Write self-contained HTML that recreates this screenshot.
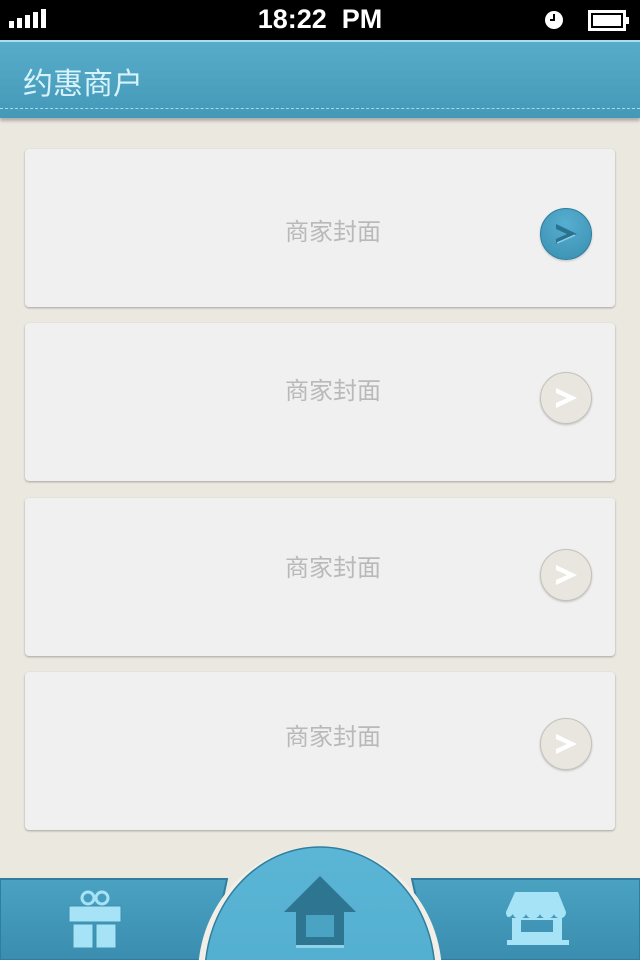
<!DOCTYPE html>
<html><head><meta charset="utf-8"><style>
html,body{margin:0;width:640px;height:960px;overflow:hidden}
body{background:#ebe8e0;font-family:"Liberation Sans","Noto Sans CJK SC",sans-serif;position:relative}
.sb{position:absolute;left:0;top:0;width:640px;height:40px;background:#000;color:#fff}
.time{position:absolute;left:0;right:0;top:4px;text-align:center;font-size:27px;font-weight:bold}
.hd{position:absolute;top:40px;left:0;width:640px;height:76px;background:linear-gradient(#56acc9,#4499b8);border-top:2px solid #a9e0f0;box-shadow:0 3px 3px rgba(0,0,0,.25)}
.hd .t{position:absolute;left:23px;top:24px;font-size:30px;color:#d8f2fb;line-height:38px}
.hd .d{position:absolute;left:0;right:0;top:66px;border-top:1px dashed #a6d9ea}
.card{position:absolute;left:25px;width:590px;height:158px;background:#f0f0f0;border-radius:4px;box-shadow:0 1px 2px rgba(0,0,0,.3)}
.card .l{position:absolute;left:0;width:590px;text-align:center;padding-left:26px;box-sizing:border-box;font-size:24px;color:#b9b9b9;line-height:30px}
.btn{position:absolute;left:515px;width:50px;height:50px;border-radius:50%;background:#e8e6df;border:1px solid #c4c2bb;box-shadow:0 1px 2px rgba(0,0,0,.2)}
.btn.on{background:radial-gradient(circle at 50% 30%,#56aed0,#3a8fb0);border-color:#2d7e9e}
.btn svg{position:absolute;left:12px;top:12px}
</style></head><body>
<div class="sb">
 <svg style="position:absolute;left:9px;top:9px" width="40" height="20"><rect x="0" y="12" width="5" height="7" fill="#fff"/><rect x="8" y="9" width="5" height="10" fill="#fff"/><rect x="16" y="6" width="5" height="13" fill="#fff"/><rect x="24" y="3" width="5" height="16" fill="#fff"/><rect x="32" y="0" width="5" height="19" fill="#fff"/></svg>
 <div class="time">18:22&nbsp; PM</div>
 <svg style="position:absolute;left:544px;top:10px" width="20" height="20"><circle cx="10" cy="10" r="9" fill="#fff"/><path d="M10 4v6h-4" stroke="#000" stroke-width="2" fill="none"/></svg>
 <svg style="position:absolute;left:588px;top:10px" width="42" height="22"><rect x="1.5" y="1.5" width="35" height="18" fill="none" stroke="#fff" stroke-width="3"/><rect x="5" y="5" width="28" height="11" fill="#fff"/><rect x="37" y="7" width="4" height="7" fill="#fff"/></svg>
</div>
<div class="hd"><div class="t" style="top:24px">约惠商户</div><div class="d"></div></div>

<div class="card" style="top:149px"><div class="l" style="top:69px">商家封面</div><div class="btn on" style="top:59px"><svg width="26" height="26"><path d="M3 3 L24 13 L3 23 L3 18 L14 13 L3 8Z" fill="#2a7290"/><path d="M4 22 L22 14" stroke="#8fd3ea" stroke-width="1.5"/></svg></div></div>
<div class="card" style="top:323px"><div class="l" style="top:54px">商家封面</div><div class="btn" style="top:49px"><svg width="26" height="26"><path d="M3 3 L24 13 L3 23 L3 18 L14 13 L3 8Z" fill="#fff"/></svg></div></div>
<div class="card" style="top:498px"><div class="l" style="top:56px">商家封面</div><div class="btn" style="top:51px"><svg width="26" height="26"><path d="M3 3 L24 13 L3 23 L3 18 L14 13 L3 8Z" fill="#fff"/></svg></div></div>
<div class="card" style="top:672px"><div class="l" style="top:51px">商家封面</div><div class="btn" style="top:46px"><svg width="26" height="26"><path d="M3 3 L24 13 L3 23 L3 18 L14 13 L3 8Z" fill="#fff"/></svg></div></div>

<svg style="position:absolute;left:0;top:840px;display:block" width="640" height="120">
 <defs><linearGradient id="g" x1="0" y1="0" x2="0" y2="1"><stop offset="0" stop-color="#4aa2c1"/><stop offset="1" stop-color="#3a8daf"/></linearGradient>
 <linearGradient id="c" x1="0" y1="0" x2="0" y2="1"><stop offset="0" stop-color="#5bb6d6"/><stop offset="1" stop-color="#4aa6c8"/></linearGradient></defs>
 <path d="M0 39 H227 L210 120 H0Z" fill="url(#g)" stroke="#2f7e9f" stroke-width="2"/>
 <path d="M640 39 H412 L430 120 H640Z" fill="url(#g)" stroke="#2f7e9f" stroke-width="2"/>
 <ellipse cx="320" cy="135" rx="122" ry="129" fill="#f2efe8"/>
 <ellipse cx="320" cy="135" rx="115" ry="128" fill="url(#c)" stroke="#2f7e9f" stroke-width="1.5"/>
 <path d="M320 36 L356 72 H344 V106 H296 V72 H284Z" fill="#2e7592"/>
 <rect x="306" y="75" width="28" height="22" fill="#4aa3c2"/>
 <rect x="296" y="105" width="48" height="3" fill="#8fd3ea"/>
 <g fill="#a7e3f7" stroke="#3c8fb0" stroke-width="1">
  <circle cx="88" cy="58" r="6" fill="none" stroke="#a7e3f7" stroke-width="3"/><circle cx="102" cy="58" r="6" fill="none" stroke="#a7e3f7" stroke-width="3"/>
  <rect x="69" y="66" width="52" height="16"/><rect x="73" y="84" width="20" height="24"/><rect x="96" y="84" width="20" height="24"/>
 </g>
 <g fill="#a7e3f7">
  <path d="M515 52 H558 L566 72 C566 80 556 80 554 74 C552 80 542 80 540 74 C538 80 528 80 526 74 C524 80 514 80 513 74 C508 80 506 76 506 72Z"/>
  <path d="M512 78 H562 V100 H512Z M521 80 V92 H553 V80Z" fill-rule="evenodd"/>
  <rect x="507" y="100" width="62" height="5"/>
 </g>
</svg>
</body></html>
